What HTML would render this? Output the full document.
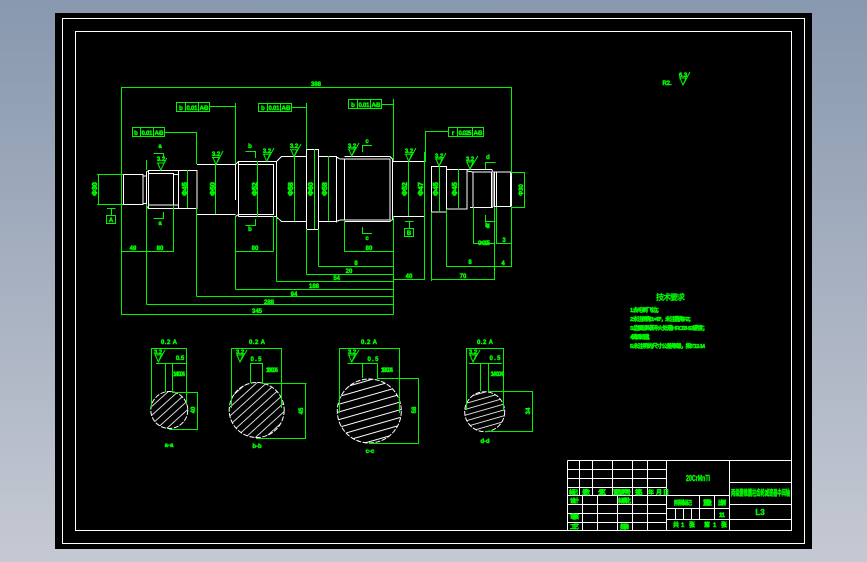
<!DOCTYPE html>
<html><head><meta charset="utf-8"><style>
html,body{margin:0;padding:0;width:867px;height:562px;overflow:hidden;background:linear-gradient(#8898ae,#c5c9d3)}
svg{position:absolute;left:0;top:0;display:block}
.w{fill:none;stroke:#fff;stroke-width:1;shape-rendering:crispEdges}
.g{fill:none;stroke:#00f400;stroke-width:1;shape-rendering:crispEdges}
.r{fill:none;stroke:#00f400;stroke-width:1}
text{fill:#00f400;font-family:"Liberation Sans","Noto Sans CJK SC",sans-serif;font-weight:bold;font-size:6px;stroke:#00f400;stroke-width:.5}
.m{text-anchor:middle}
.d{font-size:7px;stroke-width:.7}
</style></head><body>
<svg width="867" height="562" viewBox="0 0 867 562" xmlns="http://www.w3.org/2000/svg">
<defs>
<pattern id="h1" width="50" height="6.6" patternUnits="userSpaceOnUse" patternTransform="rotate(-42)"><line x1="0" x2="50" y1="1" y2="1" stroke="#fff" stroke-width=".9"/></pattern>
<pattern id="h2" width="50" height="7.4" patternUnits="userSpaceOnUse" patternTransform="rotate(-16)"><line x1="0" x2="50" y1="1" y2="1" stroke="#fff" stroke-width=".9"/></pattern>
<pattern id="h3" width="50" height="5.6" patternUnits="userSpaceOnUse" patternTransform="rotate(-16)"><line x1="0" x2="50" y1="1" y2="1" stroke="#fff" stroke-width=".9"/></pattern>
</defs>
<rect x="55" y="13" width="757" height="536" fill="#000"/>
<rect x="62.5" y="18.5" width="742" height="525" class="w"/>
<rect x="75.5" y="31.5" width="716" height="499" class="w"/>

<!-- shaft -->
<path class="w" d="M123.5 174.5H143V204.5H123.5ZM143 176H146.5V203.5H143M146.5 172L148.5 170.5H197V208.5H148.5L146.5 206ZM148.5 170.5V208.5M148.5 173.5H173.5V205H148.5M173.5 174.5H178.5M173.5 205H178.5M178.5 170.5V208.5"/>
<path class="w" d="M197 164.5H235.5M197 214.5H235.5M235.5 164.5V200M238.5 162V216.5M235.5 216.5L238.5 214.5M235.5 164.5L238.5 161.5H276.5L281.5 156.5H306.5V221.5H281.5L276.5 217V161.5M238.5 164.5H273.5V214.5H238.5M238.5 216.5H276.5M273.5 164.5V214.5"/>
<path class="w" d="M306.5 149.5H318.5V229.5H306.5ZM318.5 156.5H336.5V221.5H318.5M336.5 156.5V222.5M336.5 157L340 159H344.5V220H340L336.5 221.5M344.5 159H390V220H344.5M344.5 156.5H390L392.5 159V219.5L390 221.5H344.5M392.5 161.5H424.5V216.5H392.5"/>
<path class="w" d="M431.5 166.5H446.5V212H431.5ZM446.5 169.5H467V209H446.5M467 169.5V209M467 171L473 172H491.5V207.5H470M473 172V207.5M467 169.5H491.5L493 171.5V206.5L491.5 208M494.5 172H510.5V206.5H494.5ZM496.5 172.5V206.5M510.5 172V206.5M511.5 172V206.5"/>

<!-- green dims -->
<path class="g" d="M121.5 87.5H511.5V172M121.5 87V315M121.5 205V174M98.5 174.5V204.5M97 174.5H123M97 204.5H123M511 172.5H524.5V207.5H511"/>
<path class="g" d="M121.5 251.5H173.5V205M146.5 204V304.5M196.5 208V296.5M235.5 216V289.5M273.5 216V251.5M276.5 217V281.5M306.5 229V274.5M318.5 229V266.5M344.5 221V251.5M393.5 216V314.5M235.5 251.5H273.5M344.5 251.5H393.5M318.5 266.5H393.5M306.5 274.5H393.5M276.5 281.5H393.5M235.5 289.5H393.5M196.5 296.5H393.5M146.5 304.5H393.5M121.5 314.5H393.5M393.5 279.5H424.5V212M431.5 212V281M431.5 279.5H494.5V207M446.5 209V266.5H511.5V207M473.5 207V243.5H494.5M496.5 207V243.5H511.5"/>
<path class="g" d="M187.5 170V208M215.5 164V214M257.5 161V217M294.5 156V221M314.5 149V229M328.5 156V221M408.5 161V216M424.5 152V240M439.5 166V212M458.5 169V209M146.5 170V160"/>
<!-- tolerance boxes -->
<path class="g" d="M132.5 127.5H164.5V136.5H132.5ZM140.5 127.5V136.5M153.5 127.5V136.5M164.5 132.5H196.5V164"/>
<path class="g" d="M176.5 102.5H209.5V111.5H176.5ZM185.5 102.5V111.5M198.5 102.5V111.5M209.5 106.5H235.5V103M235.5 106V164"/>
<path class="g" d="M258.5 103.5H291.5V111.5H258.5ZM267.5 103.5V111.5M280.5 103.5V111.5M291.5 107.5H306.5M306.5 103V149"/>
<path class="g" d="M348.5 99.5H381.5V108.5H348.5ZM357.5 99.5V108.5M370.5 99.5V108.5M381.5 104.5H393.5M393.5 99V161"/>
<path class="g" d="M448.5 127.5H483.5V136.5H448.5ZM457.5 127.5V136.5M472.5 127.5V136.5M448.5 131.5H425.5V162"/>
<!-- section marks -->
<path class="g" d="M153.5 153.5H163.5V158M153.5 218.5H163.5V212M245.5 151.5H255.5V158M245.5 225.5H255.5V219M372 145.5H362.5V152M372 233.5H362.5V227M495.5 162.5H485.5V169M495.5 221.5H485.5V215"/>
<!-- datum -->
<path class="g" d="M106.5 215.5H115.5V223.5H106.5ZM107 208.5H115.5M111.5 208.5V215M404.5 228.5H413.5V236.5H404.5ZM405 221.5H413.5M409.5 221.5V228"/>
<!-- roughness -->
<path class="r" d="M156.7 163H164.7M157.7 163L160.7 170L166.7 158M216 164.5L213 157.5L219 157.5ZM212 157.5H220M216 164.5L223 151M266.7 161.3L263.7 154.3L269.7 154.3ZM262.7 154.3H270.7M266.7 161.3L274 148M294 156.7L291 149.7L297 149.7ZM290 149.7H298M294 156.7L301 144M351.7 156L348.7 149L354.7 149ZM347.7 149H355.7M351.7 156L359 143M408.7 161.3L405.7 154.3L411.7 154.3ZM404.7 154.3H412.7M408.7 161.3L416 148M439 166L436 159L442 159ZM435 159H443M439 166L446 153M470 169L467 162L473 162ZM466 162H474M470 169L478 156M683 85L680 78L686 78ZM679 78H687M683 85L690 72M158.3 362L155.3 355H161.3ZM154.3 355H162.3M158.3 362L165 350M240 362L237 355H243ZM236 355H244M240 362L247 350M351.7 362L348.7 355H354.7ZM347.7 355H355.7M351.7 362L359 350M473 362L470 355H476ZM469 355H477M473 362L480 350"/>
<g>
<text x="161" y="161" class="m">3.2</text><text x="216" y="156" class="m">3.2</text><text x="267" y="153" class="m">3.2</text><text x="294" y="148" class="m">3.2</text><text x="352" y="148" class="m">3.2</text><text x="409" y="153" class="m">3.2</text><text x="439" y="158" class="m">3.2</text><text x="470" y="161" class="m">3.2</text><text x="683" y="77" class="m">6.3</text><text x="667" y="85" class="m">R2.</text>
<text x="160" y="148" class="m">a</text><text x="160" y="225" class="m">a</text><text x="250" y="148" class="m">b</text><text x="250" y="231" class="m">b</text><text x="367" y="143" class="m">c</text><text x="367" y="240" class="m">c</text><text x="488" y="159" class="m">d</text><text x="488" y="228" class="m">d</text>
<text x="111" y="222" class="m">A</text><text x="409" y="235" class="m">B</text>
<text x="136" y="135" class="m">b</text><text x="147" y="135" class="m" textLength="11">0.01</text><text x="159" y="135" class="m" textLength="9">A-B</text>
<text x="181" y="110" class="m">b</text><text x="192" y="110" class="m" textLength="11">0.01</text><text x="204" y="110" class="m" textLength="9">A-B</text>
<text x="263" y="110" class="m">b</text><text x="274" y="110" class="m" textLength="11">0.01</text><text x="286" y="110" class="m" textLength="9">A-B</text>
<text x="353" y="107" class="m">b</text><text x="364" y="107" class="m" textLength="11">0.01</text><text x="376" y="107" class="m" textLength="9">A-B</text>
<text x="453" y="135" class="m">r</text><text x="465" y="135" class="m" textLength="13">0.025</text><text x="478" y="135" class="m" textLength="9">A-B</text>
<text x="316" y="86" class="m">388</text>
<text x="133" y="250" class="m">49</text><text x="160" y="250" class="m">80</text><text x="255" y="250" class="m">80</text><text x="369" y="250" class="m">80</text><text x="356" y="265" class="m">8</text><text x="349" y="273" class="m">20</text><text x="336.7" y="280" class="m">54</text><text x="314" y="288" class="m">188</text><text x="294" y="296" class="m">94</text><text x="269" y="304" class="m">288</text><text x="257" y="313" class="m">345</text><text x="409" y="278" class="m">40</text><text x="463" y="278" class="m">70</text><text x="470" y="264" class="m">8</text><text x="503" y="265" class="m">4</text><text x="484" y="245" class="m" textLength="12">0+0.05</text><text x="504" y="242" class="m">3</text><text x="487" y="227" class="m">b</text>
<g transform="rotate(-90)">
<text x="-189" y="187" class="m d">Φ45</text><text x="-189" y="215" class="m d">Φ50</text><text x="-189" y="257" class="m d">Φ52</text><text x="-189" y="293" class="m d">Φ58</text><text x="-189" y="313" class="m d">Φ60</text><text x="-189" y="327" class="m d">Φ58</text><text x="-189" y="407" class="m d">Φ52</text><text x="-189" y="423" class="m d">Φ47</text><text x="-189" y="438" class="m d">Φ45</text><text x="-189" y="457" class="m d">Φ45</text><text x="-189" y="97" class="m d">Φ30</text><text x="-190" y="523" class="m">Φ30</text>
</g>
</g>

<!-- sections -->
<circle cx="169.3" cy="410" r="18.5" fill="url(#h1)"/><circle cx="169.3" cy="410" r="18.5" fill="none" stroke="#fff" stroke-dasharray="5 1.5"/>
<circle cx="256.7" cy="410" r="27.5" fill="url(#h1)"/><circle cx="256.7" cy="410" r="27.5" fill="none" stroke="#fff" stroke-dasharray="5 1.5"/>
<circle cx="369.3" cy="411" r="32" fill="url(#h2)"/><circle cx="369.3" cy="411" r="32" fill="none" stroke="#fff" stroke-dasharray="5 1.5"/>
<circle cx="484.7" cy="411.7" r="20" fill="url(#h3)"/><circle cx="484.7" cy="411.7" r="20" fill="none" stroke="#fff" stroke-dasharray="5 1.5"/>
<path class="g" d="M151.5 408V348.5H186.5V405M156 363.5H186.5M165.5 363.5V392M172.5 363.5V392.5H198M197.5 392.5V429.5H169M231.5 408V348.5H281.5V408M250.5 383V363.5H262.5V383.5H306.5M305.5 383.5V438.5H256"/>
<path class="g" d="M339.5 413V348.5H399.5V413M347.5 363.5H377.5M362.5 363.5V378M377.5 363.5V378.5H418.5V443.5H369M466.5 410V348.5H503.5V410M469 363.5H502M480.5 363.5V391M488.5 363.5V391.5H532.5V431.5H485"/>
<g>
<text x="169" y="344" class="m" textLength="16">0.2 A</text><text x="257" y="344" class="m" textLength="16">0.2 A</text><text x="369" y="344" class="m" textLength="16">0.2 A</text><text x="485" y="344" class="m" textLength="16">0.2 A</text>
<text x="158" y="354" class="m">3.2</text><text x="240" y="354" class="m">3.2</text><text x="352" y="354" class="m">3.2</text><text x="473" y="354" class="m">3.2</text>
<text x="180" y="360" class="m">0.5</text><text x="256" y="361" class="m" textLength="11">0.5</text><text x="373" y="361" class="m" textLength="11">0.5</text><text x="495" y="360" class="m" textLength="11">0.5</text>
<text x="179" y="376" class="m" textLength="12">14-0.04</text><text x="272" y="372" class="m" textLength="12">16-0.04</text><text x="387" y="372" class="m" textLength="12">18-0.04</text><text x="497" y="376" class="m" textLength="13">14-0.04</text>
<text x="193" y="412" class="m" transform="rotate(-90 193 410)">40</text><text x="303" y="411" class="m" transform="rotate(-90 303 411)">45</text><text x="416" y="410" class="m" transform="rotate(-90 416 410)">58</text><text x="530" y="411" class="m" transform="rotate(-90 530 411)">34</text>
<text x="169" y="447" class="m">a-a</text><text x="257" y="448" class="m">b-b</text><text x="370" y="453" class="m">c-c</text><text x="485" y="443" class="m">d-d</text>
</g>

<!-- tech -->
<text x="656" y="300" textLength="29" style="font-size:8px;stroke-width:.2">技术要求</text>
<text x="630" y="312" textLength="32" style="font-size:5.5px">1.去毛刺飞边；</text>
<text x="630" y="321" textLength="64" style="font-size:5.5px">2.未注倒角1×45°，未注圆角R2；</text>
<text x="630" y="330" textLength="78" style="font-size:5.5px">3.齿面渗碳淬火处理HRC58-62硬度；</text>
<text x="630" y="339" textLength="23" style="font-size:5.5px">4.调质处理；</text>
<text x="630" y="348" textLength="75" style="font-size:5.5px">5.未注明的尺寸公差等级，按IT12-14</text>

<!-- title block -->
<path class="w" d="M567.5 460.5H791M567.5 460.5V530M579.5 460.5V495M592.5 460.5V495M612.5 460.5V495M632.5 460.5V530M647.5 460.5V530M666.5 460.5V530M567.5 469.5H666.5M567.5 478.5H666.5M567.5 487.5H666.5M567.5 495.5H729.5M567.5 504.5H666.5M567.5 513.5H666.5M567.5 522.5H666.5M582.5 495.5V530M597.5 495.5V530M617.5 495.5V530M666.5 508.5H729.5M666.5 519.5H791M699.5 495.5V519M714.5 495.5V519M675.5 508.5V519M683.5 508.5V519M691.5 508.5V519M729.5 460.5V530M729.5 482.5H791M729.5 504.5H791"/>
<g>
<text x="686" y="481" textLength="24" lengthAdjust="spacingAndGlyphs" style="font-size:8px">20CrMnTi</text>
<text x="731" y="495.5" textLength="59" lengthAdjust="spacingAndGlyphs" style="font-size:8px">两级圆锥圆柱齿轮减速器中间轴</text>
<text x="760" y="515" class="m" style="font-size:8px">L3</text>
<text x="569" y="494.5" textLength="9">标记</text><text x="582" y="494.5" textLength="8">处数</text><text x="598" y="494.5" textLength="8">分区</text><text x="613" y="494.5" textLength="18">更改文件号</text><text x="635" y="494.5" textLength="8">签名</text><text x="648" y="494.5" textLength="5">年</text><text x="656" y="494.5" textLength="5">月</text><text x="663" y="494.5" textLength="3">日</text>
<text x="570" y="503" textLength="9">设计</text><text x="618" y="503" textLength="13">标准化</text><text x="570" y="519" textLength="9">审核</text><text x="570" y="529" textLength="9">工艺</text><text x="620" y="529" textLength="9">批准</text>
<text x="674" y="505" textLength="18">阶段标记</text><text x="703" y="505" textLength="9">重量</text><text x="718" y="505" textLength="8">比例</text><text x="719" y="517" textLength="6">1:1</text>
<text x="673" y="527">共</text><text x="681" y="527">1</text><text x="689" y="527">张</text><text x="704" y="527">第</text><text x="713" y="527">1</text><text x="721" y="527">张</text>
</g>
</svg>
</body></html>
